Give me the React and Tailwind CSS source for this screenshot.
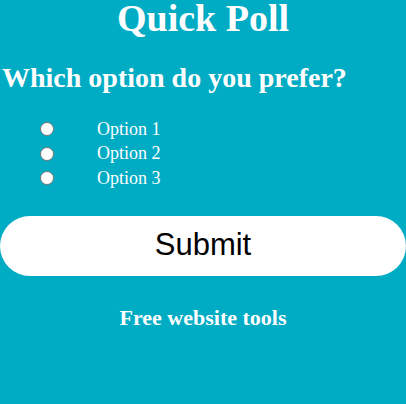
export default function App() {
  const options = ['Option 1', 'Option 2', 'Option 3']

  return (
    <div className="h-[404px] w-[406px] overflow-hidden bg-[#00abc4] font-['Liberation_Serif',serif] text-white">
      <h1 className="text-center text-[38px] font-bold leading-[36px]">Quick Poll</h1>
      <h2 className="mt-[26px] pl-[2px] text-[28px] font-bold leading-[32px]">Which option do you prefer?</h2>

      <div className="mt-[23px] flex flex-col pl-[40px]">
        {options.map((option) => (
          <label key={option} className="flex h-[24.5px] items-center text-[18px]">
            <span className="h-[14px] w-[14px] rounded-full border border-[#767676] bg-white" />
            <span className="ml-[43px]">{option}</span>
          </label>
        ))}
      </div>

      <button
        type="button"
        className="mt-[25px] h-[60px] w-full rounded-[30px] bg-white font-['Liberation_Sans',sans-serif] text-[31px] text-black"
      >
        Submit
      </button>

      <p className="mt-[25px] text-center text-[22px] font-bold">Free website tools</p>
    </div>
  )
}
